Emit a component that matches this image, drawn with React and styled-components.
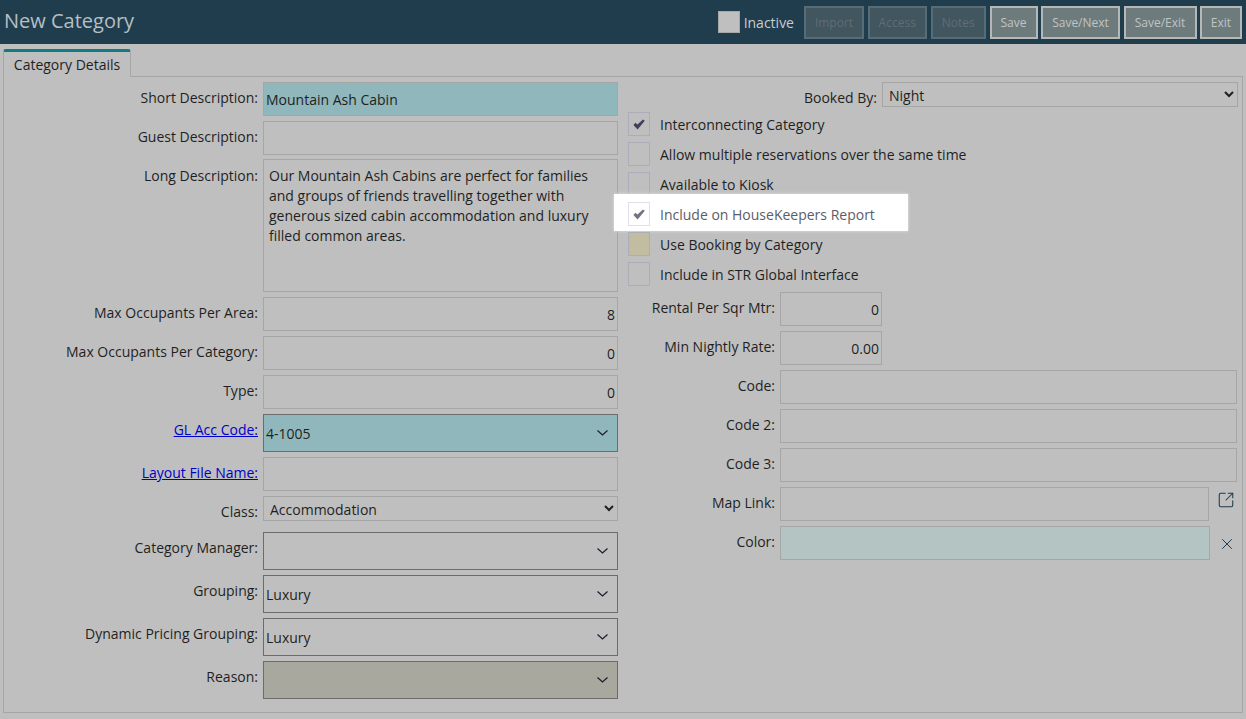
import React from "react";
import styled, { createGlobalStyle } from "styled-components";
import { SquareArrowOutUpRight, X } from "lucide-react";

const Global = createGlobalStyle`
  html, body { margin: 0; padding: 0; background: #bfbfbf; }
  body { font-family: "Open Sans", "Liberation Sans", sans-serif; font-size: 14px; color: #1f1f1f; }
  * { box-sizing: border-box; }
`;

const Page = styled.div`
  width: 1246px;
  height: 719px;
  overflow: hidden;
  background: #bfbfbf;
`;
const Header = styled.header`
  height: 44px;
  background: #203d4e;
  display: flex;
  align-items: center;
  padding: 0 4px 0 4px;
`;
const Title = styled.h1`
  flex: 1;
  margin: -2px 0 0;
  font-size: 20px;
  font-weight: 400;
  color: #b6bfc3;
  line-height: 44px;
`;
const InactiveBox = styled.span`
  width: 22px;
  height: 22px;
  background: #bfbfbf;
  border: 1px solid #a8a8a8;
  margin-right: 4px;
`;
const InactiveLabel = styled.span`
  color: #c9cccd;
  font-size: 14px;
  margin-right: 10px;
`;
const ButtonRow = styled.div`
  display: flex;
  gap: 3.5px;
`;
const HeadButton = styled.button`
  height: 33px;
  width: ${(p) => p.$w}px;
  padding: 0;
  font: 400 12px "Open Sans", sans-serif;
  border: 2px solid ${(p) => (p.disabled ? "#566d77" : "#b6b8b8")};
  background: ${(p) => (p.disabled ? "#42565f" : "#6e7b7d")};
  color: ${(p) => (p.disabled ? "#5e6e76" : "#c0c4c4")};
`;
const TabBar = styled.div`
  height: 32px;
  padding: 5px 0 0 3px;
  display: flex;
`;
const Tab = styled.div`
  width: 128px;
  height: 28px;
  border: 1px solid #a6a6a6;
  border-top: 3px solid #0e7c80;
  border-bottom: none;
  border-radius: 3px 3px 0 0;
  text-align: center;
  line-height: 26px;
  font-size: 14px;
  background: #bfbfbf;
  position: relative;
  z-index: 1;
  margin-bottom: -1px;
`;
const Panel = styled.main`
  width: 1240px;
  height: 637px;
  margin-left: 3px;
  border: 1px solid #a6a6a6;
  padding: 5px 0 0 0;
  display: flex;
  gap: 10px;
`;
const LeftCol = styled.section`
  width: 614px;
  display: flex;
  flex-direction: column;
  gap: 5px;
`;
const RightCol = styled.section`
  width: 610px;
  display: flex;
  flex-direction: column;
`;
const Row = styled.div`
  display: grid;
  grid-template-columns: ${(p) => p.$label}px ${(p) => p.$field || "1fr"};
  column-gap: 5px;
  margin-top: ${(p) => p.$mt || 0}px;
  margin-bottom: ${(p) => p.$mb || 0}px;
`;
const Label = styled.label`
  text-align: right;
  line-height: 20px;
  padding-top: ${(p) => p.$pt || 6}px;
  white-space: nowrap;
`;
const LinkLabel = styled.a`
  color: #0000cc;
  text-decoration: underline;
`;
const Input = styled.input`
  display: block;
  width: 100%;
  height: 34px;
  border: 1px solid #a6a6a6;
  background: ${(p) => p.$bg || "#bfbfbf"};
  font: 400 14px "Open Sans", sans-serif;
  color: #1f1f1f;
  padding: 0 2px;
  text-align: ${(p) => (p.$num ? "right" : "left")};
  outline: none;
  border-radius: 0;
`;
const Area = styled.textarea`
  display: block;
  width: 100%;
  height: 133px;
  border: 1px solid #a6a6a6;
  background: #bfbfbf;
  font: 400 14px/20px "Open Sans", sans-serif;
  color: #1f1f1f;
  padding: 6px 5px;
  resize: none;
  overflow: hidden;
  outline: none;
`;
const NativeSelect = styled.select`
  display: block;
  width: 100%;
  height: 25px;
  border: 1px solid #a6a6a6;
  background-color: #bfbfbf;
  font: 400 14px "Open Sans", sans-serif;
  color: #1f1f1f;
  border-radius: 0;
  outline: none;
  padding: 2px 0 0 2px;
`;
const Combo = styled.div`
  height: 38px;
  border: 1px solid #6c6c6c;
  background: ${(p) => p.$bg || "#bfbfbf"};
  display: flex;
  align-items: center;
  justify-content: space-between;
  padding: 1px 9.5px 0 2px;
  color: #1f1f1f;
`;
const Chevron = styled.svg`
  width: 11px;
  height: 6px;
  margin-top: -2px;
  flex: none;
`;
const CheckRow = styled.div`
  height: 24px;
  margin-top: ${(p) => (p.$first ? 4 : 6)}px;
  display: flex;
  align-items: center;
  gap: 10px;
  position: relative;
  color: ${(p) => (p.$spot ? "#5c5c66" : "#1f1f1f")};
  ${(p) =>
    p.$spot &&
    `&::before {
      content: "";
      position: absolute;
      left: -14px; top: -8px; width: 294px; height: 37px;
      background: #fff;
      box-shadow: 0 0 3px rgba(255,255,255,.6);
    }`}
`;
const Box = styled.span`
  position: relative;
  width: 22px;
  height: 24px;
  flex: none;
  display: flex;
  align-items: center;
  justify-content: center;
  border: 1px solid ${(p) => (p.$spot ? "#dedeef" : "#acacba")};
  background: ${(p) => p.$bg || "transparent"};
  color: ${(p) => (p.$spot ? "#73737f" : "#40405a")};
`;
const CheckText = styled.span`
  position: relative;
`;
const Side = styled.div`
  display: flex;
  align-items: flex-start;
  padding: ${(p) => p.$top}px 0 0 ${(p) => p.$left}px;
  color: #1d3a50;
`;

const Down = () => (
  <Chevron viewBox="0 0 11 6">
    <polyline points="0.5,0.5 5.5,5 10.5,0.5" fill="none" stroke="#1d1d2a" strokeWidth="1.2" />
  </Chevron>
);

const Tick = () => (
  <svg width="12" height="11" viewBox="0 0 12 11">
    <path d="M0.4 6 L2.4 3.8 L4.4 5.6 L10 0.4 L11.8 1.8 L4.6 10.4 Z" fill="currentColor" />
  </svg>
);

const checks = [
  { t: "Interconnecting Category", c: true },
  { t: "Allow multiple reservations over the same time" },
  { t: "Available to Kiosk" },
  { t: "Include on HouseKeepers Report", c: true, spot: true },
  { t: "Use Booking by Category", bg: "#c2bda0" },
  { t: "Include in STR Global Interface" },
];

const longText =
  "Our Mountain Ash Cabins are perfect for families and groups of friends travelling together with generous sized cabin accommodation and luxury filled common areas.";

export default function App() {
  return (
    <Page>
      <Global />
      <Header>
        <Title>New Category</Title>
        <InactiveBox />
        <InactiveLabel>Inactive</InactiveLabel>
        <ButtonRow>
          <HeadButton disabled $w={60}>Import</HeadButton>
          <HeadButton disabled $w={59.5}>Access</HeadButton>
          <HeadButton disabled $w={55.5}>Notes</HeadButton>
          <HeadButton $w={48}>Save</HeadButton>
          <HeadButton $w={79}>Save/Next</HeadButton>
          <HeadButton $w={73}>Save/Exit</HeadButton>
          <HeadButton $w={42}>Exit</HeadButton>
        </ButtonRow>
      </Header>
      <TabBar><Tab>Category Details</Tab></TabBar>
      <Panel>
        <LeftCol>
          <Row $label={254}><Label>Short Description:</Label><Input readOnly value="Mountain Ash Cabin" $bg="#90b7bb" /></Row>
          <Row $label={254} $mb={-1}><Label>Guest Description:</Label><Input readOnly value="" /></Row>
          <Row $label={254}><Label $pt={7}>Long Description:</Label><Area readOnly value={longText} /></Row>
          <Row $label={254}><Label>Max Occupants Per Area:</Label><Input readOnly $num value="8" /></Row>
          <Row $label={254}><Label>Max Occupants Per Category:</Label><Input readOnly $num value="0" /></Row>
          <Row $label={254}><Label>Type:</Label><Input readOnly $num value="0" /></Row>
          <Row $label={254}><Label><LinkLabel href="#">GL Acc Code:</LinkLabel></Label><Combo $bg="#90b7bb">4-1005<Down /></Combo></Row>
          <Row $label={254}><Label><LinkLabel href="#">Layout File Name:</LinkLabel></Label><Input readOnly value="" /></Row>
          <Row $label={254} $mb={5}><Label>Class:</Label><NativeSelect defaultValue="Accommodation"><option>Accommodation</option></NativeSelect></Row>
          <Row $label={254}><Label>Category Manager:</Label><Combo><span /><Down /></Combo></Row>
          <Row $label={254}><Label>Grouping:</Label><Combo>Luxury<Down /></Combo></Row>
          <Row $label={254}><Label>Dynamic Pricing Grouping:</Label><Combo>Luxury<Down /></Combo></Row>
          <Row $label={254}><Label>Reason:</Label><Combo $bg="#a9a89e"><span /><Down /></Combo></Row>
        </LeftCol>
        <RightCol>
          <Row $label={249}><Label>Booked By:</Label><NativeSelect defaultValue="Night"><option>Night</option></NativeSelect></Row>
          {checks.map((c, i) => (
            <CheckRow key={c.t} $first={i === 0} $spot={c.spot}>
              <Box $spot={c.spot} $bg={c.bg}>{c.c && <Tick />}</Box>
              <CheckText>{c.t}</CheckText>
            </CheckRow>
          ))}
          <Row $label={147} $field="102px" $mt={6} $mb={5}><Label>Rental Per Sqr Mtr:</Label><Input readOnly $num value="0" /></Row>
          <Row $label={147} $field="102px" $mb={5}><Label>Min Nightly Rate:</Label><Input readOnly $num value="0.00" /></Row>
          <Row $label={147} $field="457px" $mb={5}><Label>Code:</Label><Input readOnly value="" /></Row>
          <Row $label={147} $field="457px" $mb={5}><Label>Code 2:</Label><Input readOnly value="" /></Row>
          <Row $label={147} $field="457px" $mb={5}><Label>Code 3:</Label><Input readOnly value="" /></Row>
          <Row $label={147} $field="429px 28px" $mb={5}>
            <Label>Map Link:</Label>
            <Input readOnly value="" />
            <Side $top={4} $left={3}><SquareArrowOutUpRight size={18} strokeWidth={1.4} /></Side>
          </Row>
          <Row $label={147} $field="430px 28px">
            <Label>Color:</Label>
            <Input readOnly value="" $bg="#b3c4c3" />
            <Side $top={9} $left={3}><X size={18} strokeWidth={1.3} /></Side>
          </Row>
        </RightCol>
      </Panel>
    </Page>
  );
}
